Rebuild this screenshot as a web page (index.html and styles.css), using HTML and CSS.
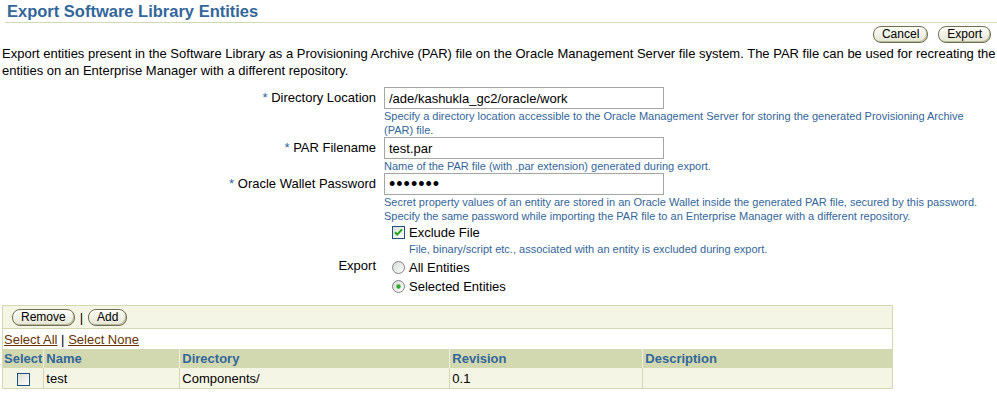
FILE: index.html
```html
<!DOCTYPE html>
<html lang="en">
<head>
  <meta charset="UTF-8" />
  <title>Export Software Library Entities</title>
  <link rel="stylesheet" href="styles.css">
</head>
<body>
  <h1 class="page-title">Export Software Library Entities</h1>
  <div class="page-actions">
    <button class="btn">Cancel</button>
    <button class="btn">Export</button>
  </div>

  <p class="intro">Export entities present in the Software Library as a Provisioning Archive (PAR) file on the Oracle Management Server file system. The PAR file can be used for recreating the entities on an Enterprise Manager with a different repository.</p>

  <div class="form">
    <label class="lbl"><span class="req">*</span> Directory Location</label>
    <div class="field">
      <input class="txt" type="text" value="/ade/kashukla_gc2/oracle/work" />
      <div class="hint">Specify a directory location accessible to the Oracle Management Server for storing the generated Provisioning Archive (PAR) file.</div>
    </div>

    <label class="lbl"><span class="req">*</span> PAR Filename</label>
    <div class="field">
      <input class="txt" type="text" value="test.par" />
      <div class="hint">Name of the PAR file (with .par extension) generated during export.</div>
    </div>

    <label class="lbl"><span class="req">*</span> Oracle Wallet Password</label>
    <div class="field">
      <input class="txt pwd" type="password" value="welcome" />
      <div class="hint">Secret property values of an entity are stored in an Oracle Wallet inside the generated PAR file, secured by this password. Specify the same password while importing the PAR file to an Enterprise Manager with a different repository.</div>
    </div>

    <div class="lbl"></div>
    <div class="field opts">
      <div class="opt">
        <svg class="box" width="13" height="13" viewBox="0 0 13 13">
          <defs><linearGradient id="bg1" x1="0" y1="0" x2="1" y2="1"><stop offset="0" stop-color="#dcdcd4"/><stop offset="1" stop-color="#ffffff"/></linearGradient></defs>
          <rect x="0.5" y="0.5" width="12" height="12" fill="url(#bg1)" stroke="#1c5180"/>
          <path d="M3 6.2 L5.2 8.6 L10 3.4" fill="none" stroke="#21a121" stroke-width="2"/>
        </svg>
        Exclude File
      </div>
      <div class="hint opt-hint">File, binary/script etc., associated with an entity is excluded during export.</div>
    </div>

    <div class="lbl lbl-export">Export</div>
    <div class="field opts radios">
      <div class="opt">
        <svg class="box" width="13" height="13" viewBox="0 0 13 13">
          <defs><linearGradient id="rg" x1="0" y1="0" x2="1" y2="1"><stop offset="0" stop-color="#d8d8d2"/><stop offset="1" stop-color="#ffffff"/></linearGradient></defs>
          <circle cx="6.5" cy="6.5" r="6" fill="url(#rg)" stroke="#7f8488"/>
        </svg>
        All Entities
      </div>
      <div class="opt">
        <svg class="box" width="13" height="13" viewBox="0 0 13 13">
          <circle cx="6.5" cy="6.5" r="6" fill="url(#rg)" stroke="#7f8488"/>
          <circle cx="6.5" cy="6.5" r="2.2" fill="#2fa82f"/>
        </svg>
        Selected Entities
      </div>
    </div>
  </div>

  <div class="results">
    <div class="toolbar">
      <button class="btn">Remove</button>
      <span class="sep">|</span>
      <button class="btn">Add</button>
    </div>
    <div class="selbar">
      <a href="#">Select All</a> <span class="sep">|</span> <a href="#">Select None</a>
    </div>
    <table class="grid">
      <tr>
        <th class="c-sel">Select</th>
        <th class="c-name">Name</th>
        <th class="c-dir">Directory</th>
        <th class="c-rev">Revision</th>
        <th>Description</th>
      </tr>
      <tr>
        <td class="c-sel">
          <svg width="13" height="13" viewBox="0 0 13 13">
            <defs><linearGradient id="bg2" x1="0" y1="0" x2="1" y2="1"><stop offset="0" stop-color="#dcdcd4"/><stop offset="1" stop-color="#ffffff"/></linearGradient></defs>
            <rect x="0.5" y="0.5" width="12" height="12" fill="url(#bg2)" stroke="#1c5180"/>
          </svg>
        </td>
        <td>test</td>
        <td>Components/</td>
        <td>0.1</td>
        <td></td>
      </tr>
    </table>
  </div>
</body>
</html>
```

FILE: styles.css
```css
body {
  margin: 0;
  font-family: "Liberation Sans", Arial, sans-serif;
  font-size: 13px;
  color: #000;
  background: #fff;
}

.page-title {
  margin: 0 0 0 5px;
  padding: 2px 0 1px 2px;
  font-size: 16.5px;
  line-height: 19px;
  font-weight: bold;
  color: #336699;
  border-bottom: 1px solid #d2d8b0;
}

.page-actions {
  display: flex;
  justify-content: flex-end;
  gap: 10px;
  padding: 3px 6px 0 0;
}

.btn {
  font-family: "Liberation Sans", Arial, sans-serif;
  font-size: 12px;
  height: 17px;
  line-height: 15px;
  padding: 0 8px;
  color: #000;
  border: 1px solid #6f6f52;
  border-radius: 8px;
  background: linear-gradient(#fdfdf8, #e6e6d4);
  box-shadow: inset -1px -1px 0 #b8b89c;
}

.intro {
  margin: 2px 0 0 2px;
  line-height: 17px;
}

.form {
  display: grid;
  grid-template-columns: 376px 1fr;
  column-gap: 8px;
  margin-top: 8px;
}

.lbl {
  text-align: right;
  line-height: 22px;
}
.req {
  color: #336699;
}

.field {
  max-width: 600px;
}

.txt {
  box-sizing: border-box;
  width: 280px;
  height: 22px;
  margin: 0;
  padding: 0 4px;
  font-family: "Liberation Sans", Arial, sans-serif;
  font-size: 13px;
  border: 1px solid #a5a5a5;
  background: #fff;
}
.pwd {
  font-size: 18px;
  letter-spacing: 1px;
}

.hint {
  font-size: 11px;
  line-height: 14px;
  color: #336699;
}

.opts {
  padding-left: 8px;
}
.opt {
  display: flex;
  align-items: center;
  gap: 4px;
  height: 19px;
}
.opt-hint {
  padding: 0 0 1px 17px;
}
.lbl-export {
  padding-top: 1px;
  line-height: 16px;
}
.radios {
  padding-top: 1px;
}

.results {
  margin: 9px 0 0 2px;
  width: 889px;
  border: 1px solid #d2d8b0;
}
.toolbar {
  display: flex;
  align-items: center;
  gap: 5px;
  height: 22px;
  padding-left: 9px;
  background: #f5f5e6;
  border-bottom: 1px solid #d2d8b0;
}
.sep {
  color: #000;
}
.selbar {
  height: 20px;
  line-height: 21px;
  padding-left: 1px;
}
.selbar a {
  color: #663300;
}

.grid {
  width: 100%;
  border-collapse: collapse;
}
.grid th {
  height: 19px;
  padding: 0 2px;
  text-align: left;
  font-weight: bold;
  color: #336699;
  background: #d2d8b0;
  border-left: 1px solid #eef0de;
}
.grid th:first-child {
  border-left: none;
  padding: 0 1px;
}
.grid td {
  height: 20px;
  padding: 0 2px;
  background: #f5f5e6;
  border-left: 1px solid #d2d8b0;
}
.grid td:first-child {
  border-left: none;
}
.grid .c-sel {
  width: 36px;
}
.grid td.c-sel {
  text-align: center;
}
.grid td.c-sel svg {
  vertical-align: middle;
}
.grid .c-name {
  width: 131px;
}
.grid .c-dir {
  width: 265px;
}
.grid .c-rev {
  width: 188px;
}
```
